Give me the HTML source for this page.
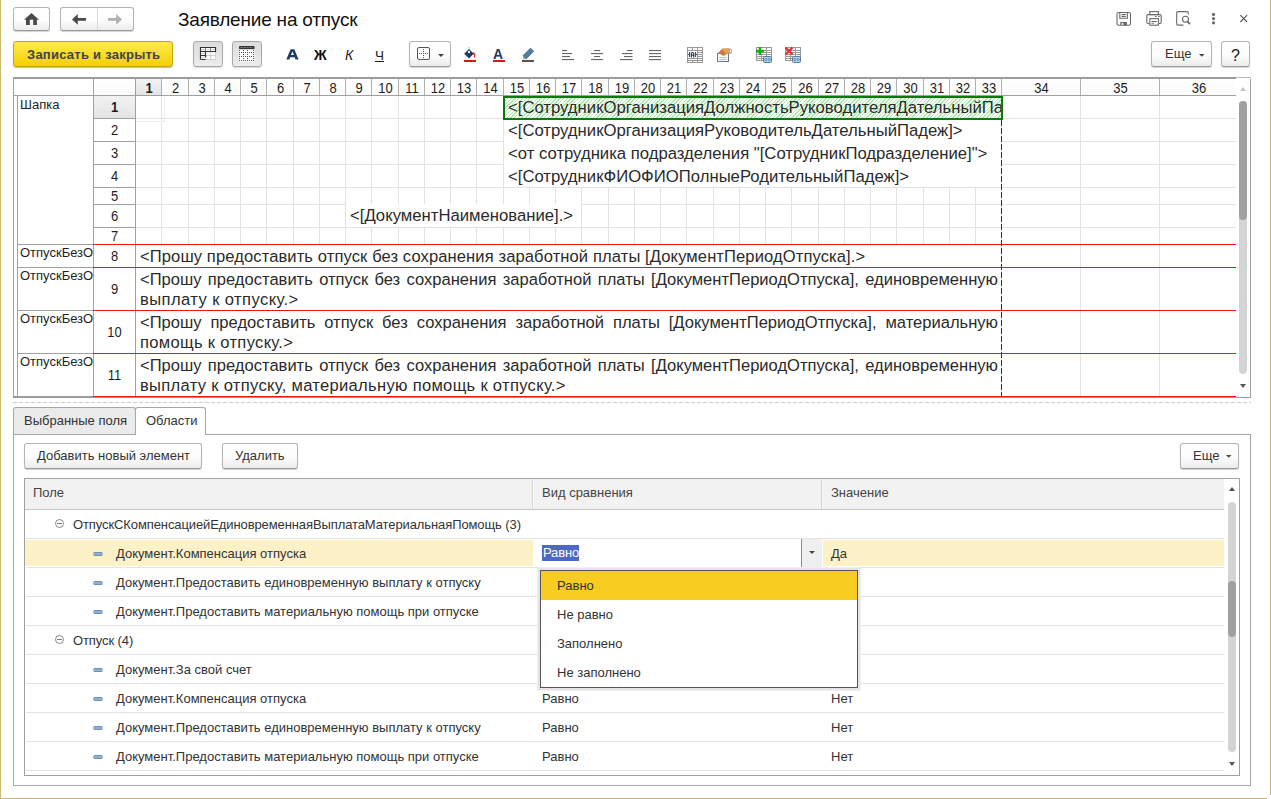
<!DOCTYPE html><html><head><meta charset='utf-8'><style>
*{margin:0;padding:0;box-sizing:border-box}
html,body{width:1271px;height:799px;overflow:hidden;background:#fff}
body{position:relative;font-family:"Liberation Sans",sans-serif;font-size:13px;color:#333}
div{position:absolute}
.t{white-space:nowrap;line-height:16px}
.btn{border:1px solid #b4b4b4;border-bottom-color:#9a9a9a;border-radius:3px;background:linear-gradient(#ffffff 0%,#fdfdfd 55%,#ececec 100%);box-shadow:0 1px 1px rgba(0,0,0,.18)}
.hl{background:#e3e3e3}
</style></head><body><div style="left:0px;top:0px;width:1px;height:799px;background:#c9b96a"></div>
<div style="left:1270px;top:0px;width:1px;height:795px;background:#c9b96a"></div>
<div style="left:0px;top:798px;width:1267px;height:1px;background:#c9b96a"></div>
<div class="btn" style="left:13px;top:7px;width:37px;height:24px;"></div>
<div class="btn" style="left:60px;top:7px;width:74px;height:24px;"></div>
<div style="left:97px;top:8px;width:1px;height:22px;background:#d8d8d8"></div>
<div class="t" style="left:178px;top:9px;font-size:19px;line-height:22px;color:#111;letter-spacing:-0.2px">Заявление на отпуск</div>
<div style="left:13px;top:41px;width:160px;height:26px;border:1px solid #c9a400;border-radius:3px;background:linear-gradient(#ffea55,#f2d000);box-shadow:0 1px 1px rgba(0,0,0,.25)"></div>
<div class="t" style="left:27px;top:47px;font-weight:bold;font-size:13px;line-height:16px;color:#40444f;letter-spacing:0.25px">Записать и закрыть</div>
<div style="left:193px;top:41px;width:30px;height:26px;border:1px solid #a9a9a9;border-radius:3px;background:linear-gradient(#dcdcdc,#ececec);box-shadow:0 1px 1px rgba(0,0,0,.15)"></div>
<div style="left:232px;top:41px;width:30px;height:26px;border:1px solid #a9a9a9;border-radius:3px;background:linear-gradient(#dcdcdc,#ececec);box-shadow:0 1px 1px rgba(0,0,0,.15)"></div>
<div class="btn" style="left:409px;top:41px;width:42px;height:26px;"></div>
<div class="btn" style="left:1151px;top:41px;width:61px;height:26px;"></div>
<div class="t" style="left:1165px;top:46px;font-size:13px;color:#333">Еще</div>
<div class="btn" style="left:1221px;top:41px;width:29px;height:26px;"></div>
<div class="t" style="left:1231px;top:48px;font-size:16px;color:#151515">?</div>
<div style="left:13px;top:77px;width:1238px;height:2px;background:#9c9c9c"></div>
<div style="left:13px;top:77px;width:1px;height:321px;background:#a0a0a0"></div>
<div style="left:1250px;top:77px;width:1px;height:321px;background:#a0a0a0"></div>
<div style="left:13px;top:396px;width:1223px;height:2px;background:#9c9c9c"></div>
<div style="left:1236px;top:397px;width:15px;height:1px;background:#9c9c9c"></div>
<div style="left:161px;top:96px;width:1px;height:300px;background:#e3e3e3"></div>
<div style="left:188px;top:96px;width:1px;height:300px;background:#e3e3e3"></div>
<div style="left:214px;top:96px;width:1px;height:300px;background:#e3e3e3"></div>
<div style="left:240px;top:96px;width:1px;height:300px;background:#e3e3e3"></div>
<div style="left:266px;top:96px;width:1px;height:300px;background:#e3e3e3"></div>
<div style="left:293px;top:96px;width:1px;height:300px;background:#e3e3e3"></div>
<div style="left:319px;top:96px;width:1px;height:300px;background:#e3e3e3"></div>
<div style="left:345px;top:96px;width:1px;height:300px;background:#e3e3e3"></div>
<div style="left:371px;top:96px;width:1px;height:300px;background:#e3e3e3"></div>
<div style="left:398px;top:96px;width:1px;height:300px;background:#e3e3e3"></div>
<div style="left:424px;top:96px;width:1px;height:300px;background:#e3e3e3"></div>
<div style="left:450px;top:96px;width:1px;height:300px;background:#e3e3e3"></div>
<div style="left:476px;top:96px;width:1px;height:300px;background:#e3e3e3"></div>
<div style="left:503px;top:96px;width:1px;height:300px;background:#e3e3e3"></div>
<div style="left:529px;top:96px;width:1px;height:300px;background:#e3e3e3"></div>
<div style="left:555px;top:96px;width:1px;height:300px;background:#e3e3e3"></div>
<div style="left:581px;top:96px;width:1px;height:300px;background:#e3e3e3"></div>
<div style="left:608px;top:96px;width:1px;height:300px;background:#e3e3e3"></div>
<div style="left:634px;top:96px;width:1px;height:300px;background:#e3e3e3"></div>
<div style="left:660px;top:96px;width:1px;height:300px;background:#e3e3e3"></div>
<div style="left:686px;top:96px;width:1px;height:300px;background:#e3e3e3"></div>
<div style="left:713px;top:96px;width:1px;height:300px;background:#e3e3e3"></div>
<div style="left:739px;top:96px;width:1px;height:300px;background:#e3e3e3"></div>
<div style="left:765px;top:96px;width:1px;height:300px;background:#e3e3e3"></div>
<div style="left:791px;top:96px;width:1px;height:300px;background:#e3e3e3"></div>
<div style="left:818px;top:96px;width:1px;height:300px;background:#e3e3e3"></div>
<div style="left:844px;top:96px;width:1px;height:300px;background:#e3e3e3"></div>
<div style="left:870px;top:96px;width:1px;height:300px;background:#e3e3e3"></div>
<div style="left:896px;top:96px;width:1px;height:300px;background:#e3e3e3"></div>
<div style="left:923px;top:96px;width:1px;height:300px;background:#e3e3e3"></div>
<div style="left:949px;top:96px;width:1px;height:300px;background:#e3e3e3"></div>
<div style="left:975px;top:96px;width:1px;height:300px;background:#e3e3e3"></div>
<div style="left:1001px;top:96px;width:1px;height:300px;background:#e3e3e3"></div>
<div style="left:1080px;top:96px;width:1px;height:300px;background:#e3e3e3"></div>
<div style="left:1159px;top:96px;width:1px;height:300px;background:#e3e3e3"></div>
<div style="left:136px;top:118px;width:1100px;height:1px;background:#e3e3e3"></div>
<div style="left:136px;top:141px;width:1100px;height:1px;background:#e3e3e3"></div>
<div style="left:136px;top:164px;width:1100px;height:1px;background:#e3e3e3"></div>
<div style="left:136px;top:187px;width:1100px;height:1px;background:#e3e3e3"></div>
<div style="left:136px;top:204px;width:1100px;height:1px;background:#e3e3e3"></div>
<div style="left:136px;top:227px;width:1100px;height:1px;background:#e3e3e3"></div>
<div style="left:504px;top:96px;width:497px;height:91px;background:#fff"></div>
<div style="left:346px;top:204px;width:235px;height:23px;background:#fff"></div>
<div style="left:136px;top:244px;width:865px;height:152px;background:#fff"></div>
<div style="left:94px;top:79px;width:1142px;height:16px;background:linear-gradient(#fff,#fbfbfb)"></div>
<div style="left:13px;top:95px;width:1223px;height:1px;background:#a0a0a0"></div>
<div style="left:135px;top:79px;width:1px;height:16px;background:#b0b0b0"></div>
<div style="left:161px;top:79px;width:1px;height:16px;background:#b0b0b0"></div>
<div style="left:188px;top:79px;width:1px;height:16px;background:#b0b0b0"></div>
<div style="left:214px;top:79px;width:1px;height:16px;background:#b0b0b0"></div>
<div style="left:240px;top:79px;width:1px;height:16px;background:#b0b0b0"></div>
<div style="left:266px;top:79px;width:1px;height:16px;background:#b0b0b0"></div>
<div style="left:293px;top:79px;width:1px;height:16px;background:#b0b0b0"></div>
<div style="left:319px;top:79px;width:1px;height:16px;background:#b0b0b0"></div>
<div style="left:345px;top:79px;width:1px;height:16px;background:#b0b0b0"></div>
<div style="left:371px;top:79px;width:1px;height:16px;background:#b0b0b0"></div>
<div style="left:398px;top:79px;width:1px;height:16px;background:#b0b0b0"></div>
<div style="left:424px;top:79px;width:1px;height:16px;background:#b0b0b0"></div>
<div style="left:450px;top:79px;width:1px;height:16px;background:#b0b0b0"></div>
<div style="left:476px;top:79px;width:1px;height:16px;background:#b0b0b0"></div>
<div style="left:503px;top:79px;width:1px;height:16px;background:#b0b0b0"></div>
<div style="left:529px;top:79px;width:1px;height:16px;background:#b0b0b0"></div>
<div style="left:555px;top:79px;width:1px;height:16px;background:#b0b0b0"></div>
<div style="left:581px;top:79px;width:1px;height:16px;background:#b0b0b0"></div>
<div style="left:608px;top:79px;width:1px;height:16px;background:#b0b0b0"></div>
<div style="left:634px;top:79px;width:1px;height:16px;background:#b0b0b0"></div>
<div style="left:660px;top:79px;width:1px;height:16px;background:#b0b0b0"></div>
<div style="left:686px;top:79px;width:1px;height:16px;background:#b0b0b0"></div>
<div style="left:713px;top:79px;width:1px;height:16px;background:#b0b0b0"></div>
<div style="left:739px;top:79px;width:1px;height:16px;background:#b0b0b0"></div>
<div style="left:765px;top:79px;width:1px;height:16px;background:#b0b0b0"></div>
<div style="left:791px;top:79px;width:1px;height:16px;background:#b0b0b0"></div>
<div style="left:818px;top:79px;width:1px;height:16px;background:#b0b0b0"></div>
<div style="left:844px;top:79px;width:1px;height:16px;background:#b0b0b0"></div>
<div style="left:870px;top:79px;width:1px;height:16px;background:#b0b0b0"></div>
<div style="left:896px;top:79px;width:1px;height:16px;background:#b0b0b0"></div>
<div style="left:923px;top:79px;width:1px;height:16px;background:#b0b0b0"></div>
<div style="left:949px;top:79px;width:1px;height:16px;background:#b0b0b0"></div>
<div style="left:975px;top:79px;width:1px;height:16px;background:#b0b0b0"></div>
<div style="left:1001px;top:79px;width:1px;height:16px;background:#b0b0b0"></div>
<div style="left:1080px;top:79px;width:1px;height:16px;background:#b0b0b0"></div>
<div style="left:1159px;top:79px;width:1px;height:16px;background:#b0b0b0"></div>
<div style="left:1237px;top:79px;width:1px;height:16px;background:#b0b0b0"></div>
<div style="left:136px;top:79px;width:25px;height:16px;background:linear-gradient(#f2f2f2,#e4e4e4)"></div>
<div class="t" style="left:136px;top:82px;width:26px;text-align:center;line-height:14px;font-size:13px;color:#1e1e1e;font-weight:bold;transform:scaleY(1.12)">1</div>
<div class="t" style="left:162px;top:82px;width:27px;text-align:center;line-height:14px;font-size:13px;color:#1e1e1e;font-weight:normal;transform:scaleY(1.12)">2</div>
<div class="t" style="left:189px;top:82px;width:26px;text-align:center;line-height:14px;font-size:13px;color:#1e1e1e;font-weight:normal;transform:scaleY(1.12)">3</div>
<div class="t" style="left:215px;top:82px;width:26px;text-align:center;line-height:14px;font-size:13px;color:#1e1e1e;font-weight:normal;transform:scaleY(1.12)">4</div>
<div class="t" style="left:241px;top:82px;width:26px;text-align:center;line-height:14px;font-size:13px;color:#1e1e1e;font-weight:normal;transform:scaleY(1.12)">5</div>
<div class="t" style="left:267px;top:82px;width:27px;text-align:center;line-height:14px;font-size:13px;color:#1e1e1e;font-weight:normal;transform:scaleY(1.12)">6</div>
<div class="t" style="left:294px;top:82px;width:26px;text-align:center;line-height:14px;font-size:13px;color:#1e1e1e;font-weight:normal;transform:scaleY(1.12)">7</div>
<div class="t" style="left:320px;top:82px;width:26px;text-align:center;line-height:14px;font-size:13px;color:#1e1e1e;font-weight:normal;transform:scaleY(1.12)">8</div>
<div class="t" style="left:346px;top:82px;width:26px;text-align:center;line-height:14px;font-size:13px;color:#1e1e1e;font-weight:normal;transform:scaleY(1.12)">9</div>
<div class="t" style="left:372px;top:82px;width:27px;text-align:center;line-height:14px;font-size:13px;color:#1e1e1e;font-weight:normal;transform:scaleY(1.12)">10</div>
<div class="t" style="left:399px;top:82px;width:26px;text-align:center;line-height:14px;font-size:13px;color:#1e1e1e;font-weight:normal;transform:scaleY(1.12)">11</div>
<div class="t" style="left:425px;top:82px;width:26px;text-align:center;line-height:14px;font-size:13px;color:#1e1e1e;font-weight:normal;transform:scaleY(1.12)">12</div>
<div class="t" style="left:451px;top:82px;width:26px;text-align:center;line-height:14px;font-size:13px;color:#1e1e1e;font-weight:normal;transform:scaleY(1.12)">13</div>
<div class="t" style="left:477px;top:82px;width:27px;text-align:center;line-height:14px;font-size:13px;color:#1e1e1e;font-weight:normal;transform:scaleY(1.12)">14</div>
<div class="t" style="left:504px;top:82px;width:26px;text-align:center;line-height:14px;font-size:13px;color:#1e1e1e;font-weight:normal;transform:scaleY(1.12)">15</div>
<div class="t" style="left:530px;top:82px;width:26px;text-align:center;line-height:14px;font-size:13px;color:#1e1e1e;font-weight:normal;transform:scaleY(1.12)">16</div>
<div class="t" style="left:556px;top:82px;width:26px;text-align:center;line-height:14px;font-size:13px;color:#1e1e1e;font-weight:normal;transform:scaleY(1.12)">17</div>
<div class="t" style="left:582px;top:82px;width:27px;text-align:center;line-height:14px;font-size:13px;color:#1e1e1e;font-weight:normal;transform:scaleY(1.12)">18</div>
<div class="t" style="left:609px;top:82px;width:26px;text-align:center;line-height:14px;font-size:13px;color:#1e1e1e;font-weight:normal;transform:scaleY(1.12)">19</div>
<div class="t" style="left:635px;top:82px;width:26px;text-align:center;line-height:14px;font-size:13px;color:#1e1e1e;font-weight:normal;transform:scaleY(1.12)">20</div>
<div class="t" style="left:661px;top:82px;width:26px;text-align:center;line-height:14px;font-size:13px;color:#1e1e1e;font-weight:normal;transform:scaleY(1.12)">21</div>
<div class="t" style="left:687px;top:82px;width:27px;text-align:center;line-height:14px;font-size:13px;color:#1e1e1e;font-weight:normal;transform:scaleY(1.12)">22</div>
<div class="t" style="left:714px;top:82px;width:26px;text-align:center;line-height:14px;font-size:13px;color:#1e1e1e;font-weight:normal;transform:scaleY(1.12)">23</div>
<div class="t" style="left:740px;top:82px;width:26px;text-align:center;line-height:14px;font-size:13px;color:#1e1e1e;font-weight:normal;transform:scaleY(1.12)">24</div>
<div class="t" style="left:766px;top:82px;width:26px;text-align:center;line-height:14px;font-size:13px;color:#1e1e1e;font-weight:normal;transform:scaleY(1.12)">25</div>
<div class="t" style="left:792px;top:82px;width:27px;text-align:center;line-height:14px;font-size:13px;color:#1e1e1e;font-weight:normal;transform:scaleY(1.12)">26</div>
<div class="t" style="left:819px;top:82px;width:26px;text-align:center;line-height:14px;font-size:13px;color:#1e1e1e;font-weight:normal;transform:scaleY(1.12)">27</div>
<div class="t" style="left:845px;top:82px;width:26px;text-align:center;line-height:14px;font-size:13px;color:#1e1e1e;font-weight:normal;transform:scaleY(1.12)">28</div>
<div class="t" style="left:871px;top:82px;width:26px;text-align:center;line-height:14px;font-size:13px;color:#1e1e1e;font-weight:normal;transform:scaleY(1.12)">29</div>
<div class="t" style="left:897px;top:82px;width:27px;text-align:center;line-height:14px;font-size:13px;color:#1e1e1e;font-weight:normal;transform:scaleY(1.12)">30</div>
<div class="t" style="left:924px;top:82px;width:26px;text-align:center;line-height:14px;font-size:13px;color:#1e1e1e;font-weight:normal;transform:scaleY(1.12)">31</div>
<div class="t" style="left:950px;top:82px;width:26px;text-align:center;line-height:14px;font-size:13px;color:#1e1e1e;font-weight:normal;transform:scaleY(1.12)">32</div>
<div class="t" style="left:976px;top:82px;width:26px;text-align:center;line-height:14px;font-size:13px;color:#1e1e1e;font-weight:normal;transform:scaleY(1.12)">33</div>
<div class="t" style="left:1002px;top:82px;width:79px;text-align:center;line-height:14px;font-size:13px;color:#1e1e1e;font-weight:normal;transform:scaleY(1.12)">34</div>
<div class="t" style="left:1081px;top:82px;width:79px;text-align:center;line-height:14px;font-size:13px;color:#1e1e1e;font-weight:normal;transform:scaleY(1.12)">35</div>
<div class="t" style="left:1160px;top:82px;width:78px;text-align:center;line-height:14px;font-size:13px;color:#1e1e1e;font-weight:normal;transform:scaleY(1.12)">36</div>
<div style="left:93px;top:79px;width:1px;height:317px;background:#a0a0a0"></div>
<div style="left:135px;top:79px;width:1px;height:317px;background:#a0a0a0"></div>
<div style="left:94px;top:96px;width:41px;height:22px;background:linear-gradient(#f2f2f2,#e4e4e4)"></div>
<div style="left:94px;top:118px;width:41px;height:1px;background:#a0a0a0"></div>
<div class="t" style="left:94px;top:96px;width:41px;height:22px;display:flex;align-items:center;justify-content:center;font-size:13px;color:#1e1e1e;font-weight:bold"><span style="display:block;transform:scaleY(1.12);line-height:14px;margin-top:1px">1</span></div>
<div style="left:94px;top:119px;width:41px;height:22px;background:#fff"></div>
<div style="left:94px;top:141px;width:41px;height:1px;background:#a0a0a0"></div>
<div class="t" style="left:94px;top:119px;width:41px;height:22px;display:flex;align-items:center;justify-content:center;font-size:13px;color:#1e1e1e;font-weight:normal"><span style="display:block;transform:scaleY(1.12);line-height:14px;margin-top:1px">2</span></div>
<div style="left:94px;top:142px;width:41px;height:22px;background:#fff"></div>
<div style="left:94px;top:164px;width:41px;height:1px;background:#a0a0a0"></div>
<div class="t" style="left:94px;top:142px;width:41px;height:22px;display:flex;align-items:center;justify-content:center;font-size:13px;color:#1e1e1e;font-weight:normal"><span style="display:block;transform:scaleY(1.12);line-height:14px;margin-top:1px">3</span></div>
<div style="left:94px;top:165px;width:41px;height:22px;background:#fff"></div>
<div style="left:94px;top:187px;width:41px;height:1px;background:#a0a0a0"></div>
<div class="t" style="left:94px;top:165px;width:41px;height:22px;display:flex;align-items:center;justify-content:center;font-size:13px;color:#1e1e1e;font-weight:normal"><span style="display:block;transform:scaleY(1.12);line-height:14px;margin-top:1px">4</span></div>
<div style="left:94px;top:188px;width:41px;height:16px;background:#fff"></div>
<div style="left:94px;top:204px;width:41px;height:1px;background:#a0a0a0"></div>
<div class="t" style="left:94px;top:188px;width:41px;height:16px;display:flex;align-items:center;justify-content:center;font-size:13px;color:#1e1e1e;font-weight:normal"><span style="display:block;transform:scaleY(1.12);line-height:14px;margin-top:1px">5</span></div>
<div style="left:94px;top:205px;width:41px;height:22px;background:#fff"></div>
<div style="left:94px;top:227px;width:41px;height:1px;background:#a0a0a0"></div>
<div class="t" style="left:94px;top:205px;width:41px;height:22px;display:flex;align-items:center;justify-content:center;font-size:13px;color:#1e1e1e;font-weight:normal"><span style="display:block;transform:scaleY(1.12);line-height:14px;margin-top:1px">6</span></div>
<div style="left:94px;top:228px;width:41px;height:16px;background:#fff"></div>
<div style="left:94px;top:244px;width:41px;height:1px;background:#a0a0a0"></div>
<div class="t" style="left:94px;top:228px;width:41px;height:16px;display:flex;align-items:center;justify-content:center;font-size:13px;color:#1e1e1e;font-weight:normal"><span style="display:block;transform:scaleY(1.12);line-height:14px;margin-top:1px">7</span></div>
<div style="left:94px;top:245px;width:41px;height:22px;background:#fff"></div>
<div style="left:94px;top:267px;width:41px;height:1px;background:#a0a0a0"></div>
<div class="t" style="left:94px;top:245px;width:41px;height:22px;display:flex;align-items:center;justify-content:center;font-size:13px;color:#1e1e1e;font-weight:normal"><span style="display:block;transform:scaleY(1.12);line-height:14px;margin-top:1px">8</span></div>
<div style="left:94px;top:268px;width:41px;height:42px;background:#fff"></div>
<div style="left:94px;top:310px;width:41px;height:1px;background:#a0a0a0"></div>
<div class="t" style="left:94px;top:268px;width:41px;height:42px;display:flex;align-items:center;justify-content:center;font-size:13px;color:#1e1e1e;font-weight:normal"><span style="display:block;transform:scaleY(1.12);line-height:14px;margin-top:1px">9</span></div>
<div style="left:94px;top:311px;width:41px;height:42px;background:#fff"></div>
<div style="left:94px;top:353px;width:41px;height:1px;background:#a0a0a0"></div>
<div class="t" style="left:94px;top:311px;width:41px;height:42px;display:flex;align-items:center;justify-content:center;font-size:13px;color:#1e1e1e;font-weight:normal"><span style="display:block;transform:scaleY(1.12);line-height:14px;margin-top:1px">10</span></div>
<div style="left:94px;top:354px;width:41px;height:42px;background:#fff"></div>
<div style="left:94px;top:396px;width:41px;height:1px;background:#a0a0a0"></div>
<div class="t" style="left:94px;top:354px;width:41px;height:42px;display:flex;align-items:center;justify-content:center;font-size:13px;color:#1e1e1e;font-weight:normal"><span style="display:block;transform:scaleY(1.12);line-height:14px;margin-top:1px">11</span></div>
<div style="left:17px;top:95px;width:1px;height:301px;background:#a0a0a0"></div>
<div style="left:17px;top:244px;width:76px;height:1px;background:#a0a0a0"></div>
<div style="left:17px;top:267px;width:76px;height:1px;background:#a0a0a0"></div>
<div style="left:17px;top:310px;width:76px;height:1px;background:#a0a0a0"></div>
<div style="left:17px;top:353px;width:76px;height:1px;background:#a0a0a0"></div>
<div class="t" style="left:20px;top:97px;color:#1e1e1e">Шапка</div>
<div class="t" style="left:20px;top:245px;width:73px;overflow:hidden;color:#1e1e1e">ОтпускБезО</div>
<div class="t" style="left:20px;top:268px;width:73px;overflow:hidden;color:#1e1e1e">ОтпускБезО</div>
<div class="t" style="left:20px;top:311px;width:73px;overflow:hidden;color:#1e1e1e">ОтпускБезО</div>
<div class="t" style="left:20px;top:354px;width:73px;overflow:hidden;color:#1e1e1e">ОтпускБезО</div>
<div style="left:164px;top:96px;width:1px;height:25px;background:#ededed"></div>
<div style="left:136px;top:121px;width:29px;height:1px;background:#ededed"></div>
<div style="left:93px;top:244px;width:1143px;height:1px;background:#f01515"></div>
<div style="left:93px;top:267px;width:1143px;height:1px;background:#f01515"></div>
<div style="left:93px;top:310px;width:1143px;height:1px;background:#f01515"></div>
<div style="left:93px;top:353px;width:1143px;height:1px;background:#f01515"></div>
<div style="left:93px;top:396px;width:1143px;height:1px;background:#f01515"></div>
<div style="left:1001px;top:120px;width:1px;height:276px;background:repeating-linear-gradient(#333 0 6px,transparent 6px 8px)"></div>
<div style="left:503px;top:96px;width:500px;height:24px;border:2px solid #0a7a0a;background:repeating-linear-gradient(135deg,#ffffff 0 1.6px,#a6eba6 1.6px 2.65px)"></div>
<div class="t" style="left:508px;top:98px;font-size:16.69px;color:#2a2a2a;line-height:20px;width:493px;overflow:hidden">&lt;[СотрудникОрганизацияДолжностьРуководителяДательныйПадеж]&gt;</div>
<div class="t" style="left:508px;top:121px;font-size:16.69px;color:#2a2a2a;line-height:20px">&lt;[СотрудникОрганизацияРуководительДательныйПадеж]&gt;</div>
<div class="t" style="left:508px;top:144px;font-size:16.69px;color:#2a2a2a;line-height:20px">&lt;от сотрудника подразделения "[СотрудникПодразделение]"&gt;</div>
<div class="t" style="left:508px;top:167px;font-size:16.69px;color:#2a2a2a;line-height:20px">&lt;[СотрудникФИОФИОПолныеРодительныйПадеж]&gt;</div>
<div class="t" style="left:350px;top:206px;font-size:16.69px;color:#2a2a2a;line-height:20px">&lt;[ДокументНаименование].&gt;</div>
<div class="t" style="left:140px;top:247px;font-size:16.56px;color:#2a2a2a;line-height:20px;letter-spacing:0.107px">&lt;Прошу предоставить отпуск без сохранения заработной платы [ДокументПериодОтпуска].&gt;</div>
<div style="left:140px;top:270px;width:858px;font-size:16.56px;color:#2a2a2a;line-height:20px;text-align:justify;text-align-last:justify;white-space:normal">&lt;Прошу предоставить отпуск без сохранения заработной платы [ДокументПериодОтпуска], единовременную</div>
<div class="t" style="left:140px;top:290px;font-size:16.56px;color:#2a2a2a;line-height:20px;letter-spacing:0.42px">выплату к отпуску.&gt;</div>
<div style="left:140px;top:313px;width:858px;font-size:16.56px;color:#2a2a2a;line-height:20px;text-align:justify;text-align-last:justify;white-space:normal">&lt;Прошу предоставить отпуск без сохранения заработной платы [ДокументПериодОтпуска], материальную</div>
<div class="t" style="left:140px;top:333px;font-size:16.56px;color:#2a2a2a;line-height:20px;letter-spacing:0.32px">помощь к отпуску.&gt;</div>
<div style="left:140px;top:356px;width:858px;font-size:16.56px;color:#2a2a2a;line-height:20px;text-align:justify;text-align-last:justify;white-space:normal">&lt;Прошу предоставить отпуск без сохранения заработной платы [ДокументПериодОтпуска], единовременную</div>
<div class="t" style="left:140px;top:376px;font-size:16.56px;color:#2a2a2a;line-height:20px;letter-spacing:0.31px">выплату к отпуску, материальную помощь к отпуску.&gt;</div>
<div style="left:1236px;top:78px;width:14px;height:318px;background:#fff"></div>
<div style="left:1236px;top:77px;width:15px;height:1px;background:#b8b8b8"></div>
<div style="left:1236px;top:78px;width:15px;height:1px;background:#fff"></div>
<div style="left:1240px;top:87px;width:0;height:0;border-left:3px solid transparent;border-right:3px solid transparent;border-bottom:4px solid #c4c4c4"></div>
<div style="left:1239px;top:101px;width:8px;height:273px;background:#d4d4d4;border-radius:4px"></div>
<div style="left:1239px;top:101px;width:8px;height:119px;background:#a0a0a0;border-radius:4px"></div>
<div style="left:1240px;top:384px;width:0;height:0;border-left:3px solid transparent;border-right:3px solid transparent;border-top:4px solid #555"></div>
<div style="left:13px;top:402px;width:1238px;height:1px;background:repeating-linear-gradient(90deg,#cccccc 0 4px,transparent 4px 6px)"></div>
<div style="left:13px;top:434px;width:1238px;height:352px;border:1px solid #a8a8a8"></div>
<div style="left:13px;top:407px;width:123px;height:27px;border:1px solid #a8a8a8;border-bottom:none;border-radius:3px 3px 0 0;background:#ebebeb"></div>
<div style="left:135px;top:407px;width:71px;height:28px;border:1px solid #a8a8a8;border-bottom:none;border-radius:3px 3px 0 0;background:#fff"></div>
<div class="t" style="left:24px;top:413px;color:#333">Выбранные поля</div>
<div class="t" style="left:146px;top:413px;color:#333">Области</div>
<div class="btn" style="left:24px;top:443px;width:178px;height:26px;"></div>
<div class="t" style="left:37px;top:448px;color:#333">Добавить новый элемент</div>
<div class="btn" style="left:222px;top:443px;width:76px;height:26px;"></div>
<div class="t" style="left:235px;top:448px;color:#333">Удалить</div>
<div class="btn" style="left:1180px;top:443px;width:59px;height:26px;"></div>
<div class="t" style="left:1193px;top:448px;color:#333">Еще</div>
<div style="left:24px;top:478px;width:1216px;height:298px;border:1px solid #a0a0a0"></div>
<div style="left:25px;top:479px;width:1199px;height:30px;background:#f2f2f2"></div>
<div style="left:25px;top:509px;width:1199px;height:1px;background:#c8c8c8"></div>
<div class="t" style="left:33px;top:485px;color:#444">Поле</div>
<div class="t" style="left:542px;top:485px;color:#444">Вид сравнения</div>
<div class="t" style="left:831px;top:485px;color:#444">Значение</div>
<div style="left:532px;top:480px;width:1px;height:28px;background:#d4d4d4"></div>
<div style="left:533px;top:480px;width:1px;height:28px;background:#fafafa"></div>
<div style="left:821px;top:480px;width:1px;height:28px;background:#d4d4d4"></div>
<div style="left:822px;top:480px;width:1px;height:28px;background:#fafafa"></div>
<div style="left:26px;top:538px;width:1198px;height:1px;background:#e4e4e4"></div>
<div style="left:55px;top:519px;width:9px;height:9px;border:1px solid #8a8a8a;border-radius:50%"></div>
<div style="left:57px;top:523px;width:5px;height:1px;background:#777"></div>
<div class="t" style="left:73px;top:517px;color:#333;letter-spacing:-0.1px">ОтпускСКомпенсациейЕдиновременнаяВыплатаМатериальнаяПомощь (3)</div>
<div style="left:26px;top:567px;width:1198px;height:1px;background:#e4e4e4"></div>
<div style="left:25px;top:540px;width:508px;height:26px;background:#fdf1c8"></div>
<div style="left:823px;top:540px;width:401px;height:26px;background:#fdf1c8"></div>
<div style="left:93px;top:552px;width:10px;height:4px;background:linear-gradient(#5a80a4,#a4c0da 50%,#5a80a4);border-radius:2px"></div>
<div class="t" style="left:116px;top:546px;color:#333">Документ.Компенсация отпуска</div>
<div class="t" style="left:831px;top:546px;color:#333">Да</div>
<div style="left:26px;top:596px;width:1198px;height:1px;background:#e4e4e4"></div>
<div style="left:93px;top:581px;width:10px;height:4px;background:linear-gradient(#5a80a4,#a4c0da 50%,#5a80a4);border-radius:2px"></div>
<div class="t" style="left:116px;top:575px;color:#333">Документ.Предоставить единовременную выплату к отпуску</div>
<div style="left:26px;top:625px;width:1198px;height:1px;background:#e4e4e4"></div>
<div style="left:93px;top:610px;width:10px;height:4px;background:linear-gradient(#5a80a4,#a4c0da 50%,#5a80a4);border-radius:2px"></div>
<div class="t" style="left:116px;top:604px;color:#333">Документ.Предоставить материальную помощь при отпуске</div>
<div style="left:26px;top:654px;width:1198px;height:1px;background:#e4e4e4"></div>
<div style="left:55px;top:635px;width:9px;height:9px;border:1px solid #8a8a8a;border-radius:50%"></div>
<div style="left:57px;top:639px;width:5px;height:1px;background:#777"></div>
<div class="t" style="left:73px;top:633px;color:#333;letter-spacing:-0.1px">Отпуск (4)</div>
<div style="left:26px;top:683px;width:1198px;height:1px;background:#e4e4e4"></div>
<div style="left:93px;top:668px;width:10px;height:4px;background:linear-gradient(#5a80a4,#a4c0da 50%,#5a80a4);border-radius:2px"></div>
<div class="t" style="left:116px;top:662px;color:#333">Документ.За свой счет</div>
<div style="left:26px;top:712px;width:1198px;height:1px;background:#e4e4e4"></div>
<div style="left:93px;top:697px;width:10px;height:4px;background:linear-gradient(#5a80a4,#a4c0da 50%,#5a80a4);border-radius:2px"></div>
<div class="t" style="left:116px;top:691px;color:#333">Документ.Компенсация отпуска</div>
<div class="t" style="left:542px;top:691px;color:#333">Равно</div>
<div class="t" style="left:831px;top:691px;color:#333">Нет</div>
<div style="left:26px;top:741px;width:1198px;height:1px;background:#e4e4e4"></div>
<div style="left:93px;top:726px;width:10px;height:4px;background:linear-gradient(#5a80a4,#a4c0da 50%,#5a80a4);border-radius:2px"></div>
<div class="t" style="left:116px;top:720px;color:#333">Документ.Предоставить единовременную выплату к отпуску</div>
<div class="t" style="left:542px;top:720px;color:#333">Равно</div>
<div class="t" style="left:831px;top:720px;color:#333">Нет</div>
<div style="left:26px;top:770px;width:1198px;height:1px;background:#e4e4e4"></div>
<div style="left:93px;top:755px;width:10px;height:4px;background:linear-gradient(#5a80a4,#a4c0da 50%,#5a80a4);border-radius:2px"></div>
<div class="t" style="left:116px;top:749px;color:#333">Документ.Предоставить материальную помощь при отпуске</div>
<div class="t" style="left:542px;top:749px;color:#333">Равно</div>
<div class="t" style="left:831px;top:749px;color:#333">Нет</div>
<div style="left:534px;top:539px;width:268px;height:28px;background:#fff"></div>
<div class="t" style="left:542px;top:545px;height:16px;padding:0 0 0 1px;background:#4f67c5;color:#fff;letter-spacing:-0.15px">Равно</div>
<div style="left:801px;top:539px;width:1px;height:28px;background:#8c8c8c"></div>
<div style="left:802px;top:539px;width:20px;height:28px;background:#efefef"></div>
<div style="left:809px;top:551px;width:0;height:0;border-left:3px solid transparent;border-right:3px solid transparent;border-top:3px solid #444"></div>
<div style="left:1224px;top:479px;width:15px;height:296px;background:#fff"></div>
<div style="left:1229px;top:487px;width:0;height:0;border-left:3.5px solid transparent;border-right:3.5px solid transparent;border-bottom:4px solid #555"></div>
<div style="left:1228px;top:502px;width:8px;height:250px;background:#d4d4d4;border-radius:4px"></div>
<div style="left:1228px;top:581px;width:8px;height:56px;background:#a0a0a0;border-radius:4px"></div>
<div style="left:1229px;top:762px;width:0;height:0;border-left:3.5px solid transparent;border-right:3.5px solid transparent;border-top:4px solid #555"></div>
<div style="left:537px;top:567px;width:324px;height:124px;background:#f0f0f0;border-radius:2px"></div>
<div style="left:538px;top:568px;width:322px;height:122px;background:#e4e4e4;border-radius:1px"></div>
<div style="left:540px;top:570px;width:318px;height:118px;background:#fff;border:1px solid #555"></div>
<div style="left:541px;top:571px;width:316px;height:29px;background:#f9cc22"></div>
<div class="t" style="left:557px;top:578px;color:#333">Равно</div>
<div class="t" style="left:557px;top:607px;color:#333">Не равно</div>
<div class="t" style="left:557px;top:636px;color:#333">Заполнено</div>
<div class="t" style="left:557px;top:665px;color:#333">Не заполнено</div>
<svg style="position:absolute;left:0;top:0" width="1271" height="799" viewBox="0 0 1271 799"><path d="M31.5 13 L24 19.8 L26 19.8 L26 25 L29.8 25 L29.8 19.8 L33.2 19.8 L33.2 25 L36.9 25 L36.9 19.8 L39 19.8 Z" fill="#4a4a4a"/><path d="M72 19.4 L77.8 14 L77.8 18 L86 18 L86 20.8 L77.8 20.8 L77.8 24.8 Z" fill="#4a4a4a"/><path d="M122 19.4 L116.2 14 L116.2 18 L108 18 L108 20.8 L116.2 20.8 L116.2 24.8 Z" fill="#b0b0b0"/><rect x="200" y="47" width="16" height="13" fill="#fff"/><g stroke="#d0d0d0" stroke-width="1" fill="none"><path d="M210.5 52 V59.5 M205 55.5 H215.5 M205 59.5 H215.5 M215.5 52 V59.5"/></g><g stroke="#888" stroke-width="1"><path d="M205.5 48 V51 M210.5 48 V51"/></g><g stroke="#d4d4d4" stroke-width="1"><path d="M201.5 49.5 H204.5 M206.5 49.5 H209.5 M211.5 49.5 H214.5 M201.5 53.5 H204.5 M201.5 57.5 H204.5"/></g><g stroke="#333" stroke-width="1.2" fill="none"><path d="M200.5 59.5 V47.5 H215.5 V51.5 H200.5 M205.5 51.5 V57.5 M200.5 55.5 H205.5 M200.5 59.5 H205.5"/></g><rect x="239" y="46" width="15.5" height="3.2" rx="0.8" fill="#333"/><path d="M240.5 47.6 H253" stroke="#aaa" stroke-width="0.8" stroke-dasharray="2 1"/><rect x="239" y="49.5" width="15.5" height="12" fill="#fff"/><g fill="#555"><rect x="239" y="50" width="1" height="1"/><rect x="243" y="50" width="1" height="1"/><rect x="247" y="50" width="1" height="1"/><rect x="253" y="50" width="1" height="1"/><rect x="239" y="52" width="1" height="1"/><rect x="241" y="52" width="1" height="1"/><rect x="243" y="52" width="1" height="1"/><rect x="245" y="52" width="1" height="1"/><rect x="247" y="52" width="1" height="1"/><rect x="249" y="52" width="1" height="1"/><rect x="251" y="52" width="1" height="1"/><rect x="253" y="52" width="1" height="1"/><rect x="239" y="54" width="1" height="1"/><rect x="243" y="54" width="1" height="1"/><rect x="247" y="54" width="1" height="1"/><rect x="253" y="54" width="1" height="1"/><rect x="239" y="56" width="1" height="1"/><rect x="241" y="56" width="1" height="1"/><rect x="243" y="56" width="1" height="1"/><rect x="245" y="56" width="1" height="1"/><rect x="247" y="56" width="1" height="1"/><rect x="249" y="56" width="1" height="1"/><rect x="251" y="56" width="1" height="1"/><rect x="253" y="56" width="1" height="1"/><rect x="239" y="58" width="1" height="1"/><rect x="243" y="58" width="1" height="1"/><rect x="247" y="58" width="1" height="1"/><rect x="253" y="58" width="1" height="1"/><rect x="239" y="60" width="1" height="1"/><rect x="241" y="60" width="1" height="1"/><rect x="243" y="60" width="1" height="1"/><rect x="245" y="60" width="1" height="1"/><rect x="247" y="60" width="1" height="1"/><rect x="249" y="60" width="1" height="1"/><rect x="251" y="60" width="1" height="1"/><rect x="253" y="60" width="1" height="1"/></g><path fill-rule="evenodd" d="M286.3 59.6 L290.6 49.3 L294.3 49.3 L298.6 59.6 L295.5 59.6 L294.7 57.3 L290.2 57.3 L289.4 59.6 Z M291 55 L293.9 55 L292.45 51.3 Z" fill="#1f3c62"/><text x="314" y="59.6" font-family="Liberation Sans" font-weight="bold" font-size="14" fill="#111">Ж</text><text x="345" y="59.6" font-family="Liberation Sans" font-style="italic" font-size="14" fill="#222">К</text><text x="375" y="59.6" font-family="Liberation Sans" font-size="13.5" fill="#222">Ч</text><rect x="375" y="61" width="9" height="1" fill="#222"/><rect x="417.5" y="47.5" width="12" height="12" rx="1.5" fill="#fff" stroke="#555" stroke-width="1"/><g fill="#555"><rect x="419" y="53" width="1" height="1"/><rect x="421" y="53" width="1" height="1"/><rect x="425" y="53" width="1" height="1"/><rect x="427" y="53" width="1" height="1"/><rect x="423" y="49" width="1" height="1"/><rect x="423" y="51" width="1" height="1"/><rect x="423" y="53" width="1" height="1"/><rect x="423" y="55" width="1" height="1"/><rect x="423" y="57" width="1" height="1"/></g><path d="M438 54 H444 L441 57 Z" fill="#444"/><path d="M469 49 L473.7 53.8 L469 58.6 L464.2 53.8 Z" fill="#1f3a5c"/><circle cx="469" cy="52" r="1.2" fill="#e8eef5"/><rect x="468.4" y="47" width="1.4" height="2" fill="#b8cde0"/><path d="M473 52 Q476 53 475 57.5 L474 57.5 Q474.5 54.5 472.6 53.5 Z" fill="#e02020"/><rect x="464" y="60" width="12" height="2" fill="#d81818"/><text x="493" y="59" font-family="Liberation Sans" font-weight="bold" font-size="14" fill="#1f3a62">A</text><rect x="493" y="60" width="12" height="2" fill="#d81818"/><path d="M530.5 48.2 L533.6 51.3 L526 58.9 L522.9 55.8 Z" fill="#4a7fa8" stroke="#1f3f5a" stroke-width="0.6"/><path d="M522.9 55.8 L526 58.9 L523 59.6 Z" fill="#e8a55a"/><rect x="522" y="60" width="12" height="2" fill="#555"/><g fill="#666"><rect x="562" y="50" width="5" height="1.1"/><rect x="562" y="53" width="10" height="1.1"/><rect x="562" y="56" width="8" height="1.1"/><rect x="562" y="59" width="12" height="1.1"/><rect x="594" y="50" width="6" height="1.1"/><rect x="591" y="53" width="12" height="1.1"/><rect x="594" y="56" width="6" height="1.1"/><rect x="591" y="59" width="12" height="1.1"/><rect x="627" y="50" width="5.5" height="1.1"/><rect x="622" y="53" width="10.5" height="1.1"/><rect x="624" y="56" width="8.5" height="1.1"/><rect x="620" y="59" width="12.5" height="1.1"/><rect x="649" y="50" width="12" height="1.1"/><rect x="649" y="53" width="12" height="1.1"/><rect x="649" y="56" width="12" height="1.1"/><rect x="649" y="59" width="12" height="1.1"/></g><rect x="687.5" y="47.5" width="15" height="15" fill="#fff" stroke="#999" stroke-width="1"/><g stroke="#999" stroke-width="1" fill="none"><path d="M692.5 47.5 V50.5 M697.5 47.5 V62.5 M687.5 50.5 H702.5 M687.5 58.5 H697.5 M687.5 60.5 H702.5 M692.5 60.5 V62.5 M697.5 52.5 H702.5 M697.5 54.5 H702.5 M697.5 56.5 H702.5 M697.5 58.5 H702.5"/></g><g stroke="#2a5a80" stroke-width="1.2" fill="none"><path d="M689.5 52 V57 M695.5 52 V57 M688 54.5 H689.5 M695.5 54.5 H697"/></g><path d="M691.3 57.5 V53.3 Q692.5 51.6 693.7 53.3 V57.5 M691.3 55.3 H693.7" stroke="#333" stroke-width="1.1" fill="none"/><rect x="717.5" y="53.5" width="11" height="8" fill="#f4f6f8" stroke="#6c7c8c" stroke-width="1"/><path d="M719.5 57.5 H726.5 M719.5 59.5 H726.5" stroke="#a8b8c8" stroke-width="0.8"/><path d="M718 53 L722 48.5 L729 48 L729.5 53 L724 56 Z" fill="#e0a060"/><path d="M718.5 53 L722 49.5 L726 53.5 L723 55.5 Z" fill="#b86a3a" opacity="0.7"/><rect x="729.5" y="49" width="2" height="4.5" fill="#dfe9f0" stroke="#5a7a7a" stroke-width="0.5"/><rect x="756.5" y="47.5" width="15" height="13" fill="#fff" stroke="#999" stroke-width="1"/><g stroke="#999" stroke-width="1" fill="none"><path d="M766.5 47.5 V60.5 M761.5 54.5 V60.5 M756.5 50.5 H771.5 M756.5 52.5 H771.5 M756.5 54.5 H771.5 M756.5 56.5 H766.5 M756.5 58.5 H766.5"/></g><path d="M758.8 47 H761.2 V49.8 H764 V52.2 H761.2 V55 H758.8 V52.2 H756 V49.8 H758.8 Z" fill="#10b010"/><rect x="763.5" y="56.5" width="8" height="6" rx="1.2" fill="#a8d8f2" stroke="#5a7a9a" stroke-width="1"/><circle cx="765.8" cy="59.5" r="1.1" fill="none" stroke="#5a7a9a" stroke-width="0.8"/><circle cx="769.2" cy="59.5" r="1.1" fill="none" stroke="#5a7a9a" stroke-width="0.8"/><rect x="785.5" y="47.5" width="15" height="13" fill="#fff" stroke="#999" stroke-width="1"/><g stroke="#999" stroke-width="1" fill="none"><path d="M795.5 47.5 V60.5 M790.5 54.5 V60.5 M785.5 50.5 H800.5 M785.5 52.5 H800.5 M785.5 54.5 H800.5 M785.5 56.5 H795.5 M785.5 58.5 H795.5"/></g><path d="M785.5 47.5 L792.5 54.5 M792.5 47.5 L785.5 54.5" stroke="#e03030" stroke-width="2.2"/><rect x="792.5" y="56.5" width="8" height="6" rx="1.2" fill="#a8d8f2" stroke="#5a7a9a" stroke-width="1"/><circle cx="794.8" cy="59.5" r="1.1" fill="none" stroke="#5a7a9a" stroke-width="0.8"/><circle cx="798.2" cy="59.5" r="1.1" fill="none" stroke="#5a7a9a" stroke-width="0.8"/><g stroke="#6a6a6a" stroke-width="1.1" fill="none"><rect x="1117" y="12.5" width="13.5" height="12.8" rx="1.5"/><path d="M1119.8 12.5 V18.3 H1127.4 V12.5"/><path d="M1121.5 14.5 H1125.8 M1121.5 16.4 H1125.8"/><path d="M1120.8 25.3 V22.6 H1126.4 V25.3"/></g><rect x="1123.5" y="23" width="3" height="2.3" fill="#6a6a6a"/><g stroke="#6a6a6a" stroke-width="1.1" fill="none"><rect x="1149.8" y="11.6" width="8.6" height="3"/><path d="M1149.5 23.5 H1148 Q1146.8 23.5 1146.8 22.3 V15.8 Q1146.8 14.6 1148 14.6 H1160 Q1161.2 14.6 1161.2 15.8 V22.3 Q1161.2 23.5 1160 23.5 H1158.5"/><rect x="1149.8" y="18.6" width="8.6" height="6.6"/><path d="M1151.5 21.5 H1156.8 M1151.5 23.3 H1153.8 M1155 16.5 H1156.7 M1158 16.5 H1159.7"/></g><g stroke="#6a6a6a" stroke-width="1.1" fill="none"><path d="M1188.3 14.5 V12.8 Q1188.3 11.6 1187.1 11.6 H1177.9 Q1176.7 11.6 1176.7 12.8 V23.9 Q1176.7 25.1 1177.9 25.1 H1183.5"/><circle cx="1185.5" cy="19.3" r="3"/></g><path d="M1187.6 21.6 L1190 24.2" stroke="#6a6a6a" stroke-width="1.8"/><g fill="#6a6a6a"><circle cx="1213.5" cy="14.4" r="1.6"/><circle cx="1213.5" cy="18.6" r="1.6"/><circle cx="1213.5" cy="22.8" r="1.6"/></g><path d="M1240.3 15.2 L1247.1 22 M1247.1 15.2 L1240.3 22" stroke="#555" stroke-width="1.1"/><path d="M1199 54 H1204.5 L1201.75 56.8 Z" fill="#444"/><path d="M1226 455 H1231.5 L1228.75 457.8 Z" fill="#444"/></svg></body></html>
